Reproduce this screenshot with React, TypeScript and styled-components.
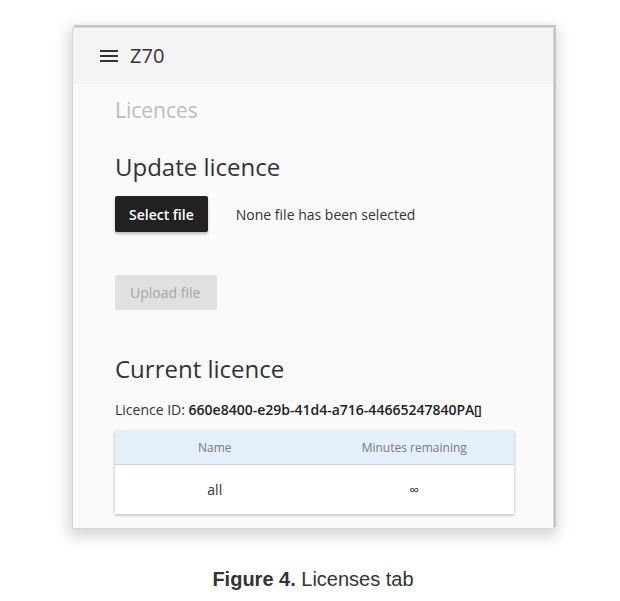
import React from "react";
import styled, { createGlobalStyle } from "styled-components";

const Global = createGlobalStyle`
  html, body { margin: 0; padding: 0; background: #ffffff; }
  body { font-family: "Open Sans", "Noto Sans", sans-serif; }
  * { box-sizing: border-box; }
`;

const Page = styled.div`
  width: 620px;
  height: 601px;
  display: flex;
  flex-direction: column;
  align-items: flex-start;
  padding: 28px 0 0 73px;
`;

const Frame = styled.div`
  width: 480px;
  height: 500px;
  background: #fafafa;
  display: flex;
  flex-direction: column;
  overflow: hidden;
  box-shadow: 0 0 0 1px #d6d6d6, 2px -2px 0 1px #c4c4c4, 0 4px 14px 4px rgba(0, 0, 0, 0.18);
`;

const TopBar = styled.div`
  height: 56px;
  background: #f4f4f4;
  display: flex;
  align-items: center;
  padding-left: 27px;
  gap: 12px;
`;

const MenuIcon = styled.svg`
  width: 18px;
  height: 14px;
  display: block;
`;

const AppTitle = styled.div`
  font-size: 20px;
  color: #333;
  line-height: 1;
`;

const Content = styled.div`
  padding: 0 39px 0 42px;
  display: flex;
  flex-direction: column;
`;

const Breadcrumb = styled.div`
  font-size: 21px;
  color: #bdbdbd;
  margin-top: 12px;
  line-height: 28px;
`;

const SectionTitle = styled.h2<{ $top: number }>`
  font-size: 24px;
  font-weight: 400;
  color: #333;
  margin: ${(p) => p.$top}px 0 0 0;
  line-height: 32px;
`;

const FileRow = styled.div`
  display: flex;
  align-items: center;
  gap: 28px;
  margin-top: 13px;
`;

const Button = styled.button<{ $disabled?: boolean }>`
  font-family: "Open Sans", "Noto Sans", sans-serif;
  font-size: 14px;
  font-weight: ${(p) => (p.$disabled ? 400 : 600)};
  height: ${(p) => (p.$disabled ? 35 : 36)}px;
  padding: 0 ${(p) => (p.$disabled ? 15 : 14)}px;
  border: none;
  border-radius: 2px;
  color: ${(p) => (p.$disabled ? "#a6a6a6" : "#ffffff")};
  background: ${(p) => (p.$disabled ? "#e0e0e0" : "#212121")};
  box-shadow: ${(p) => (p.$disabled ? "none" : "0 2px 3px rgba(0,0,0,0.25)")};
  align-self: flex-start;
`;

const FileStatus = styled.span`
  font-size: 14px;
  color: #333;
`;

const UploadButton = styled(Button)`
  margin-top: 43px;
  width: 102px;
  overflow: hidden;
  white-space: nowrap;
  text-align: left;
`;

const IdLine = styled.div`
  font-size: 14px;
  color: #333;
  margin-top: 16px;
  line-height: 18px;
`;

const IdValue = styled.span`
  font-weight: 600;
  color: #222;
`;

const Table = styled.div`
  margin-top: 12px;
  width: 399px;
  background: #ffffff;
  box-shadow: 0 1px 3px rgba(0, 0, 0, 0.3);
  display: grid;
  grid-template-columns: 1fr 1fr;
`;

const HeadCell = styled.div`
  height: 34px;
  background: #e3effb;
  border-bottom: 1px solid #c8d3de;
  display: flex;
  align-items: center;
  justify-content: center;
  font-size: 12px;
  color: #7a7a7a;
`;

const Cell = styled.div`
  height: 49px;
  display: flex;
  align-items: center;
  justify-content: center;
  font-size: 14px;
  color: #333;
`;

const Caption = styled.div`
  width: 480px;
  margin-top: 40px;
  text-align: center;
  font-family: "Liberation Sans", Arial, sans-serif;
  font-size: 20px;
  color: #333;
`;

const Bold = styled.b`
  font-weight: 700;
`;

export default function App() {
  return (
    <>
      <Global />
      <Page>
        <Frame>
          <TopBar>
            <MenuIcon viewBox="0 0 18 14">
              <rect x="0" y="1" width="18" height="2" fill="#333" />
              <rect x="0" y="6" width="18" height="2" fill="#333" />
              <rect x="0" y="11" width="18" height="2" fill="#333" />
            </MenuIcon>
            <AppTitle>Z70</AppTitle>
          </TopBar>
          <Content>
            <Breadcrumb>Licences</Breadcrumb>
            <SectionTitle $top={27}>Update licence</SectionTitle>
            <FileRow>
              <Button>Select file</Button>
              <FileStatus>None file has been selected</FileStatus>
            </FileRow>
            <UploadButton $disabled>Upload file</UploadButton>
            <SectionTitle $top={43}>Current licence</SectionTitle>
            <IdLine>
              Licence ID: <IdValue>660e8400-e29b-41d4-a716-44665247840PA▯</IdValue>
            </IdLine>
            <Table>
              <HeadCell>Name</HeadCell>
              <HeadCell>Minutes remaining</HeadCell>
              <Cell>all</Cell>
              <Cell>∞</Cell>
            </Table>
          </Content>
        </Frame>
        <Caption>
          <Bold>Figure 4.</Bold> Licenses tab
        </Caption>
      </Page>
    </>
  );
}
